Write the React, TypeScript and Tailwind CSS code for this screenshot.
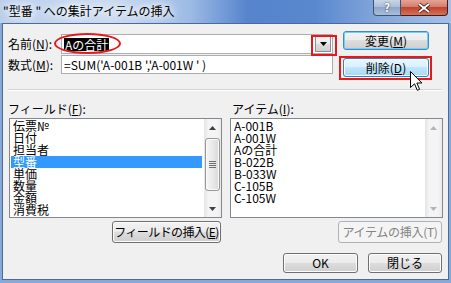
import React from "react";

const fields = ["伝票№", "日付", "担当者", "型番", "単価", "数量", "金額", "消費税"];
const items = ["A-001B", "A-001W", "Aの合計", "B-022B", "B-033W", "C-105B", "C-105W"];

function Key({ k }: { k: string }) {
  return <span className="underline underline-offset-[1px]">{k}</span>;
}

function Arrow({ up, disabled }: { up?: boolean; disabled?: boolean }) {
  return (
    <svg width="7" height="4" viewBox="0 0 7 4">
      <path
        d={up ? "M3.5 0 L7 4 L0 4 Z" : "M0 0 L7 0 L3.5 4 Z"}
        fill={disabled ? "#b4b4b4" : "#404040"}
      />
    </svg>
  );
}

function ScrollBar({ disabled }: { disabled?: boolean }) {
  return (
    <div className="w-[17px] flex flex-col bg-[linear-gradient(90deg,#e4e4e4,#f4f4f4_25%,#f4f4f4_75%,#eaeaea)]">
      <div className="h-[17px] flex items-center justify-center">
        <Arrow up disabled={disabled} />
      </div>
      <div className="flex-1">
        {!disabled && (
          <div className="mt-[2px] mx-[1px] h-[53px] rounded-[3px] border border-[#979797] bg-[linear-gradient(90deg,#f6f6f6,#e9e9e9_50%,#d8d8d8)] shadow-[inset_0_0_0_1px_#fbfbfb] flex flex-col items-center justify-center gap-[1px]">
            {[0, 1, 2, 3].map((i) => (
              <div key={i} className="w-[7px] h-px bg-[#6f6f6f]" />
            ))}
          </div>
        )}
      </div>
      <div className="h-[17px] flex items-center justify-center">
        <Arrow disabled={disabled} />
      </div>
    </div>
  );
}

function ListBox({ rows, selected }: { rows: string[]; selected?: number }) {
  return (
    <div className="w-[213px] h-[100px] border border-[#828790] bg-white flex">
      <div className="flex-1 pt-px">
        {rows.map((r, i) => (
          <div
            key={r}
            className={
              i === selected
                ? "h-[12px] leading-[12px] ml-px mr-[2px] pl-[2px] bg-[#3399ff] text-white"
                : "h-[12px] leading-[12px] ml-px mr-[2px] pl-[2px] text-black"
            }
          >
            {r}
          </div>
        ))}
      </div>
      <ScrollBar disabled={selected === undefined} />
    </div>
  );
}

function Button({
  children,
  variant = "normal",
  className = "",
}: {
  children: React.ReactNode;
  variant?: "normal" | "default" | "hover" | "disabled";
  className?: string;
}) {
  const styles = {
    normal:
      "border-[#707070] bg-[linear-gradient(#f2f2f2_0%,#ebebeb_50%,#dddddd_50%,#cfcfcf_100%)] shadow-[inset_0_0_0_1px_#fcfcfc] text-black",
    default:
      "border-[#3c8dc5] bg-[linear-gradient(#f2f2f2_0%,#ebebeb_50%,#dddddd_50%,#cfcfcf_100%)] shadow-[inset_0_0_0_1px_#6fd0f6] text-black",
    hover:
      "border-[#3c7fb1] bg-[linear-gradient(#eaf6fd_0%,#d9f0fc_50%,#bee6fd_50%,#a7d9f5_100%)] shadow-[inset_0_0_0_1px_#f4fbfe] text-black",
    disabled: "border-[#adb2b5] bg-[#f4f4f4] text-[#838383]",
  }[variant];
  return (
    <div
      className={`flex items-center justify-center whitespace-nowrap rounded-[3px] border text-[12px] leading-none ${styles} ${className}`}
    >
      {children}
    </div>
  );
}

export default function App() {
  return (
    <div className="relative w-[451px] h-[283px] overflow-hidden flex flex-col bg-[#87a9d9] font-['Noto_Sans_CJK_JP','Noto_Sans',sans-serif] text-[12px] text-black">
      {/* title bar */}
      <div className="h-[23px] flex items-start bg-[linear-gradient(90deg,#b9cfec_0%,#c9dbf1_25%,#9dbbe5_42%,#5584cc_55%,#5a88cf_70%,#86a9db_85%,#a4c0e6_100%)]">
        <div className="pl-[3px] pt-[3px] text-[12px] leading-[16px] text-black [text-shadow:0_0_6px_#fff,0_0_10px_#fff,0_0_14px_#fff]">
          "型番 " への集計アイテムの挿入
        </div>
        <div className="ml-auto mr-[3px] flex">
          <div className="w-[28px] h-[16px] rounded-bl-[4px] border border-t-0 border-[#3f5273] bg-[linear-gradient(#c9d6e8,#a9bbd6_50%,#8fa6c7_50%,#a7bedd)] flex items-center justify-center text-white text-[11px] font-bold leading-none [text-shadow:0_0_2px_#333]">
            ?
          </div>
          <div className="w-[47px] h-[16px] rounded-br-[4px] border border-l-0 border-t-0 border-[#4a1b14] bg-[linear-gradient(#e4a496,#d27a68_50%,#c0442e_50%,#d2735c)] flex items-center justify-center">
            <svg width="12" height="10" viewBox="0 0 12 10">
              <path d="M1 1 L11 9 M11 1 L1 9" stroke="#3a120c" strokeWidth="3.4" />
              <path d="M1 1 L11 9 M11 1 L1 9" stroke="#fff" strokeWidth="2" />
            </svg>
          </div>
        </div>
      </div>

      {/* client area */}
      <div className="flex-1 mx-[2px] mb-[3px] border border-[#4c6a94] bg-[#f0f0f0] flex flex-col">
        {/* name / formula section */}
        <div className="flex pt-[6px] pl-[5px]">
          <div className="flex flex-col pt-[4px]">
            <div className="flex items-center h-[20px]">
              <div className="w-[53px]">
                名前(<Key k="N" />):
              </div>
              <div className="w-[272px] h-[20px] border border-[#abadb3] bg-white flex items-center">
                <span className="ml-[2px] px-px bg-black text-white leading-[13px]">Aの合計</span>
                <div className="ml-auto mr-px w-[16px] h-[16px] border border-[#8e8f8f] bg-[linear-gradient(#f2f2f2,#ebebeb_50%,#dddddd_50%,#cfcfcf)] flex items-center justify-center">
                  <svg width="7" height="4" viewBox="0 0 7 4">
                    <path d="M0 0 L7 0 L3.5 4 Z" fill="#000" />
                  </svg>
                </div>
              </div>
            </div>
            <div className="flex items-center h-[19px] mt-px">
              <div className="w-[53px]">
                数式(<Key k="M" />):
              </div>
              <div className="w-[272px] h-[19px] border border-[#abadb3] bg-white flex items-center pl-[2px]">
                =SUM('A-001B ','A-001W ' )
              </div>
            </div>
          </div>
          <div className="ml-[10px] flex flex-col">
            <Button variant="default" className="w-[86px] h-[19px] mt-px">
              変更(<Key k="M" />)
            </Button>
            <Button variant="hover" className="w-[86px] h-[19px] mt-[8px]">
              削除(<Key k="D" />)
            </Button>
          </div>
        </div>

        {/* separator */}
        <div className="mt-[12px] ml-[5px] mr-[6px] border-t border-[#d5d5d5] border-b border-b-white" />

        {/* lists */}
        <div className="flex pl-[5px] mt-[10px]">
          <div className="w-[214px] flex flex-col">
            <div className="h-[15px] leading-[15px]">
              フィールド(<Key k="F" />):
            </div>
            <div className="mt-[2px] ml-px">
              <ListBox rows={fields} selected={3} />
            </div>
            <Button className="self-end mr-[1px] mt-[3px] w-[109px] h-[22px] tracking-[-0.6px]">
              フィールドの挿入(<Key k="E" />)
            </Button>
          </div>
          <div className="ml-[8px] w-[213px] flex flex-col">
            <div className="h-[15px] leading-[15px] pl-[2px]">
              アイテム(<Key k="I" />):
            </div>
            <div className="mt-[2px]">
              <ListBox rows={items} />
            </div>
            <Button variant="disabled" className="self-end mr-px mt-[3px] w-[104px] h-[22px] tracking-[-0.3px]">
              アイテムの挿入(T)
            </Button>
          </div>
        </div>

        {/* OK / close */}
        <div className="flex justify-end gap-[10px] pr-[6px] mt-[10px]">
          <Button className="w-[75px] h-[20px]">OK</Button>
          <Button className="w-[74px] h-[20px]">閉じる</Button>
        </div>
      </div>

      {/* annotations */}
      <div className="absolute left-[54px] top-[33px] w-[67px] h-[21px] rounded-[50%] border-2 border-[#e8181a]" />
      <div className="absolute left-[311px] top-[35px] w-[26px] h-[21px] border-2 border-[#e8181a]" />
      <div className="absolute left-[339px] top-[56px] w-[93px] h-[24px] border-2 border-[#e8181a]" />

      {/* mouse cursor */}
      <svg className="absolute left-[410px] top-[71px]" width="13" height="21" viewBox="0 0 13 21">
        <path
          d="M0.5 0.5 L0.5 16.5 L4.5 12.8 L7.3 19.3 L9.6 18.3 L6.9 12 L11.9 12 Z"
          fill="#fff"
          stroke="#000"
          strokeWidth="1"
          strokeLinejoin="miter"
        />
      </svg>
    </div>
  );
}
